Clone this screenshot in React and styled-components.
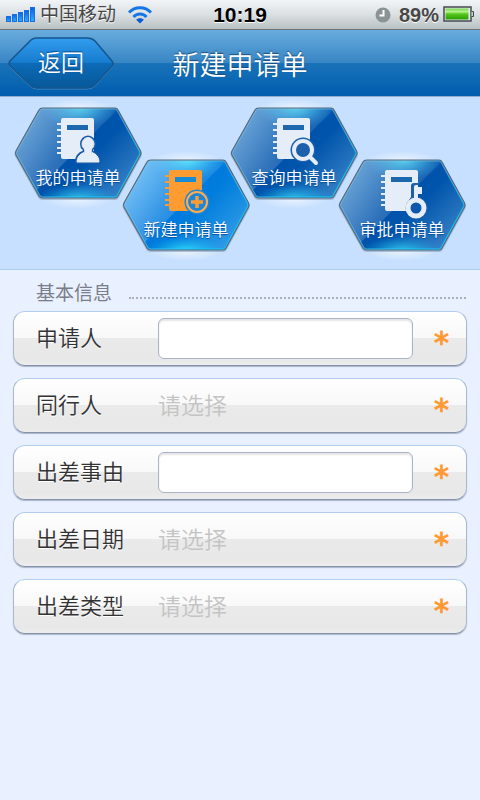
import React from "react";
import styled, { createGlobalStyle } from "styled-components";

const GlobalStyle = createGlobalStyle`
  * { box-sizing: border-box; }
  html { min-height: 100%; background: #e9f0ff; }
  body {
    margin: 0;
    background: #e9f0ff;
    font-family: "Liberation Sans", "Noto Sans CJK SC", sans-serif;
    font-weight: 350;
  }
  button, input, select { font: inherit; }
`;

const Page = styled.div`
  min-height: 100vh;
  background: #e9f0ff;
`;

const StatusBar = styled.div`
  display: grid;
  grid-template-columns: 1fr auto 1fr;
  align-items: center;
  height: 30px;
  padding: 0 5px;
  color: #474747;
  background: linear-gradient(#f2f5f7, #dbe0e2 50%, #b9c1c3);
  border-bottom: 1px solid #6d747a;
  text-shadow: 0 1px 0 #fff;
`;

const StatusGroup = styled.div`
  display: flex;
  align-items: center;
  justify-content: ${(p) => (p.$end ? "flex-end" : "flex-start")};
  gap: ${(p) => (p.$end ? 4 : 5)}px;
  line-height: 28px;
`;

const Carrier = styled.span`
  padding-right: 6px;
  font-size: 19px;
  font-weight: 400;
`;

const Clock = styled.time`
  font-size: 21px;
  line-height: 28px;
  font-weight: 700;
  color: #000;
`;

const Percent = styled.span`
  padding-left: 4px;
  font-size: 20px;
  font-weight: 700;
`;

const Header = styled.header`
  display: grid;
  grid-template-columns: 1fr auto 1fr;
  align-items: center;
  height: 67px;
  padding: 0 7px;
  background: linear-gradient(#69acde 0%, #3785c4 50%, #1a73b9 50%, #005dae 100%);
  border-bottom: 1px solid #91acd0;
`;

const BackButton = styled.button`
  position: relative;
  justify-self: start;
  width: 108px;
  height: 54px;
  padding: 0;
  border: 0;
  background: none;
  color: #fff;
  font-size: 23px;
  line-height: 54px;
  text-shadow: 0 -1px 1px #064a87;
  cursor: pointer;
`;

const Backdrop = styled.svg`
  position: absolute;
  inset: 0;
  width: 100%;
  height: 100%;
  overflow: visible;
`;

const Front = styled.span`
  position: relative;
`;

const Title = styled.h1`
  margin: 0;
  padding-top: 6px;
  color: #fff;
  font-size: 27px;
  line-height: 60px;
  font-weight: 350;
  text-shadow: 0 -1px 1px #174c7c;
`;

const Nav = styled.nav`
  display: flex;
  justify-content: center;
  height: 173px;
  padding-top: 10px;
  background: #c7e0ff;
  border-bottom: 1px solid #b1cdee;
`;

const NavButton = styled.button`
  position: relative;
  flex: none;
  display: flex;
  flex-direction: column;
  align-items: center;
  width: 128px;
  height: 93px;
  padding: 9px 0 0;
  margin: ${(p) => (p.$low ? 52 : 0)}px 0 0 -20px;
  border: 0;
  background: none;
  color: #fff;
  font-size: 17px;
  line-height: 26px;
  text-shadow: 0 1px 1px #0a4f9c;
  cursor: pointer;
  &:first-child { margin-left: 0; }
`;

const NavIcon = styled.svg`
  position: relative;
  width: 48px;
  height: 50px;
  overflow: visible;
`;

const Form = styled.form`
  padding: 7px 13px;
`;

const Section = styled.fieldset`
  min-width: 0;
  margin: 0;
  padding: 0;
  border: 0;
`;

const SectionHead = styled.div`
  display: flex;
  align-items: center;
  gap: 17px;
  height: 34px;
  padding: 0 1px 0 23px;
`;

const SectionTitle = styled.h2`
  margin: 0;
  color: #7a7e88;
  font-size: 19px;
  line-height: 30px;
  font-weight: 400;
`;

const DottedRule = styled.hr`
  flex: 1;
  margin: 8px 0 0;
  border: 0;
  border-top: 2px dotted #a9aebd;
`;

const Rows = styled.div`
  display: flex;
  flex-direction: column;
  gap: 12px;
`;

const Row = styled.div`
  display: grid;
  grid-template-columns: 122px 1fr 53px;
  align-items: center;
  height: 55px;
  padding-left: 22px;
  border: 1px solid;
  border-color: #b1cdf0 #a7b9d2 #8391a9;
  border-radius: 12px;
  background: linear-gradient(#ffffff 0%, #f8f8f8 49%, #eaeaea 50%, #e8e8e8 90%, #ededed 100%);
  box-shadow: 0 1px 1px #a9b6c9;
`;

const Label = styled.label`
  color: #333;
  font-size: 22px;
  line-height: 52px;
  text-shadow: 0 1px 0 #fff;
`;

const TextInput = styled.input`
  width: 100%;
  height: 41px;
  padding: 0 10px;
  color: #333;
  font-size: 22px;
  background: #fff;
  border: 1px solid #a9b4c8;
  border-radius: 6px;
  box-shadow: inset 0 2px 2px #e4e4e4;
`;

const Select = styled.select`
  appearance: none;
  width: 100%;
  height: 41px;
  padding: 0;
  border: 0;
  background: transparent;
  color: #c4c4c4;
  font-size: 23px;
`;

const Required = styled.span`
  padding-left: 4px;
  text-align: center;
  color: #ff9a33;
  font-family: "DejaVu Sans", sans-serif;
  font-size: 30px;
  line-height: 40px;
  height: 32px;
  font-weight: 400;
  -webkit-text-stroke: 1px #ff9a33;
`;

const Signal = () => (
  <svg width="30" height="17" viewBox="0 0 30 17" aria-hidden="true">
    <defs>
      <linearGradient id="sig" x1="0" x2="0" y1="0" y2="1">
        <stop offset="0" stopColor="#0b62e0" />
        <stop offset="1" stopColor="#35aaff" />
      </linearGradient>
    </defs>
    {[5, 7, 9, 11, 14].map((h, i) => (
      <rect key={h} x={1.5 + i * 6} y={15.5 - h} width="4" height={h} fill="url(#sig)" stroke="#1370e6" />
    ))}
  </svg>
);

const Wifi = () => (
  <svg width="26" height="19" viewBox="0 0 26 19" aria-hidden="true">
    <g fill="none" stroke="#1377e7" strokeWidth="3">
      <path d="M2 7.500C8 1.200 18 1.200 24 7.500" />
      <path d="M6.500 12C10 8 16 8 19.500 12" />
    </g>
    <path d="M13 18.500 9.200 14.800C11 12.800 15 12.800 16.800 14.800Z" fill="#0b5bd0" />
  </svg>
);

const ClockIcon = () => (
  <svg width="16" height="16" viewBox="0 0 16 16" aria-hidden="true">
    <circle cx="8" cy="8" r="7.500" fill="#8b9494" />
    <path d="M8.500 3v5.500H4.500" fill="none" stroke="#fff" strokeWidth="2" />
  </svg>
);

const Battery = () => (
  <svg width="32" height="17" viewBox="0 0 32 17" aria-hidden="true">
    <defs>
      <linearGradient id="bat" x1="0" x2="0" y1="0" y2="1">
        <stop offset="0" stopColor="#79d64e" />
        <stop offset=".3" stopColor="#b5f58b" />
        <stop offset=".5" stopColor="#55c51e" />
        <stop offset="1" stopColor="#2c9d05" />
      </linearGradient>
    </defs>
    <rect x="1" y="1" width="27" height="14" fill="#e5ebed" stroke="#444952" strokeWidth="1.500" />
    <rect x="2.500" y="2.500" width="23" height="11" fill="url(#bat)" />
    <path d="M28.500 5.500h2v5h-2" fill="#c8ced2" stroke="#444952" />
  </svg>
);

const hexPath =
  "M29 1H101Q103 1 104 3L126.500 44Q127.500 46 126.500 48L104 89Q103 91 101 91H29Q26 91 25 89L2 48Q1 46 2 44L25 3Q26 1 29 1Z";

const HexBackdrop = ({ id, active }) => (
  <Backdrop viewBox="0 0 128 93" aria-hidden="true">
    <defs>
      <linearGradient id={`${id}-base`} gradientUnits="userSpaceOnUse" x1="20" y1="5" x2="106" y2="88">
        <stop offset="0" stopColor={active ? "#259df0" : "#156fbf"} />
        <stop offset=".42" stopColor={active ? "#0079dd" : "#0052ab"} />
        <stop offset=".6" stopColor={active ? "#007ddd" : "#0054ab"} />
        <stop offset="1" stopColor={active ? "#2f9be6" : "#3580c6"} />
      </linearGradient>
      <linearGradient id={`${id}-shine`} gradientUnits="userSpaceOnUse" x1="8" y1="24" x2="70" y2="60">
        <stop offset="0" stopColor="#fff" stopOpacity=".36" />
        <stop offset="1" stopColor="#fff" stopOpacity=".08" />
      </linearGradient>
      <radialGradient id={`${id}-glow`}>
        <stop offset="0" stopColor={active ? "#30e8ff" : "#35cdec"} stopOpacity=".9" />
        <stop offset="1" stopColor="#1ab2f0" stopOpacity="0" />
      </radialGradient>
      <radialGradient id={`${id}-halo`}>
        <stop offset="0" stopColor="#fff" stopOpacity=".6" />
        <stop offset="1" stopColor="#fff" stopOpacity="0" />
      </radialGradient>
      <linearGradient id={`${id}-rim`} x1="0" y1="0" x2="1" y2="1">
        <stop offset=".3" stopColor="#7fcdf2" stopOpacity=".5" />
        <stop offset=".8" stopColor="#12c8ff" />
      </linearGradient>
      <clipPath id={`${id}-clip`}>
        <path d={hexPath} />
      </clipPath>
    </defs>
    <ellipse cx="64" cy="1" rx="36" ry="9" fill={`url(#${id}-halo)`} />
    <ellipse cx="64" cy="92" rx="36" ry="10" fill={`url(#${id}-halo)`} />
    <path d={hexPath} transform="translate(0 1)" fill="none" stroke="#7890ad" strokeOpacity=".5" strokeWidth="2" />
    <g clipPath={`url(#${id}-clip)`}>
      <path d={hexPath} fill={`url(#${id}-base)`} />
      <ellipse cx="66" cy="1" rx="38" ry="20" fill={`url(#${id}-glow)`} />
      <ellipse cx="64" cy="92" rx="40" ry="15" fill={`url(#${id}-glow)`} />
      <path d="M0 0H106L13 93H0Z" fill={`url(#${id}-shine)`} />
      <path d={hexPath} fill="none" stroke={`url(#${id}-rim)`} strokeWidth="3" />
    </g>
    <path d={hexPath} fill="none" stroke="#55697a" strokeWidth="1.200" />
  </Backdrop>
);

const Notebook = ({ color, hole }) => (
  <>
    <path
      fill={color}
      d="M6 3Q6 1 8 1H37Q39 1 39 3V40Q39 42 37 42H8Q6 42 6 40V37H2V35H6V32H2V30H6V26H2V24H6V20H2V18H6V14H2V12H6V8H2V6H6Z"
    />
    <rect x="12" y="8" width="21" height="5" fill={hole} />
  </>
);

const personPath =
  "M22 45Q22 38 29 35.500Q31 34.500 29 31.500Q27 30 27 27A6 6.500 0 0 1 39 27Q39 30 37 31.500Q35 34.500 37 35.500Q44 38 44 45Z";

const icons = {
  person: (
    <g>
      <path d={personPath} fill="#1759a6" stroke="#1759a6" strokeWidth="4" />
      <path d={personPath} fill="#e4edf8" stroke="#e4edf8" strokeWidth="1" />
    </g>
  ),
  plus: (
    <g>
      <circle cx="34" cy="33" r="12.500" fill="#1e86d6" />
      <circle cx="34" cy="33" r="10" fill="none" stroke="#ffac51" strokeWidth="2" />
      <path d="M34 27V39M28 33H40" stroke="#ff9c31" strokeWidth="3.500" />
    </g>
  ),
  search: (
    <g strokeLinecap="round">
      <circle cx="32" cy="33" r="12.500" fill="#1c5fab" />
      <circle cx="32" cy="33" r="9" fill="none" stroke="#e4edf8" strokeWidth="4" />
      <path d="M39 40L45 46" stroke="#e4edf8" strokeWidth="4" />
    </g>
  ),
  key: (
    <g>
      <path d="M32 28V17Q32 14 35 14H39V28A11 11 0 1 1 30 31Z" fill="#1c5fab" />
      <circle cx="37" cy="39" r="8" fill="#0c58ab" stroke="#e4edf8" strokeWidth="5" />
      <path d="M35 32V18Q35 16 37 16H39V18H43V25H39V32Z" fill="#e4edf8" />
    </g>
  ),
};

const navItems = [
  { label: "我的申请单", icon: "person" },
  { label: "新建申请单", icon: "plus", low: true, active: true },
  { label: "查询申请单", icon: "search" },
  { label: "审批申请单", icon: "key", low: true },
];

const fields = [
  { id: "applicant", label: "申请人", type: "text" },
  { id: "companion", label: "同行人", type: "select" },
  { id: "reason", label: "出差事由", type: "text" },
  { id: "date", label: "出差日期", type: "select" },
  { id: "kind", label: "出差类型", type: "select" },
];

export default function App() {
  return (
    <Page>
      <GlobalStyle />
      <StatusBar>
        <StatusGroup>
          <Signal />
          <Carrier>中国移动</Carrier>
          <Wifi />
        </StatusGroup>
        <Clock>10:19</Clock>
        <StatusGroup $end>
          <ClockIcon />
          <Percent>89%</Percent>
          <Battery />
        </StatusGroup>
      </StatusBar>
      <Header>
        <BackButton type="button">
          <Backdrop viewBox="0 0 108 54" aria-hidden="true">
            <defs>
              <linearGradient id="back" x1="0" x2="0" y1="0" y2="1">
                <stop offset="0" stopColor="#329df0" />
                <stop offset=".5" stopColor="#167bcd" />
                <stop offset=".5" stopColor="#0c6bb8" />
                <stop offset="1" stopColor="#075899" />
              </linearGradient>
            </defs>
            <path d="M30 3H80Q85 3 88 6L105 26Q107 29 105 31L88 50Q85 53 80 53H30Q26 53 23 50L3 31Q1 29 3 26L22 7Q25 3 30 3Z" fill="none" stroke="#8abce4" strokeOpacity=".5" />
            <path d="M30 2H80Q85 2 88 5L105 25Q107 28 105 30L88 49Q85 52 80 52H30Q26 52 23 49L3 30Q1 28 3 25L22 6Q25 2 30 2Z" fill="url(#back)" stroke="#17568d" strokeWidth="1.500" />
          </Backdrop>
          <Front>返回</Front>
        </BackButton>
        <Title>新建申请单</Title>
      </Header>
      <Nav>
        {navItems.map((item) => (
          <NavButton key={item.icon} type="button" $low={item.low} aria-current={item.active ? "page" : undefined}>
            <HexBackdrop id={item.icon} active={item.active} />
            <NavIcon viewBox="-1 -1 48 50" aria-hidden="true">
              <Notebook color={item.active ? "#ff9c31" : "#e4edf8"} hole={item.active ? "#168bd8" : "#1c67ae"} />
              {icons[item.icon]}
            </NavIcon>
            <Front>{item.label}</Front>
          </NavButton>
        ))}
      </Nav>
      <Form>
        <Section aria-labelledby="basic-info">
          <SectionHead>
            <SectionTitle id="basic-info">基本信息</SectionTitle>
            <DottedRule />
          </SectionHead>
          <Rows>
            {fields.map((f) => (
              <Row key={f.id}>
                <Label htmlFor={f.id}>{f.label}</Label>
                {f.type === "text" ? (
                  <TextInput id={f.id} type="text" required />
                ) : (
                  <Select id={f.id} required defaultValue="">
                    <option value="">请选择</option>
                  </Select>
                )}
                <Required aria-hidden="true">*</Required>
              </Row>
            ))}
          </Rows>
        </Section>
      </Form>
    </Page>
  );
}
